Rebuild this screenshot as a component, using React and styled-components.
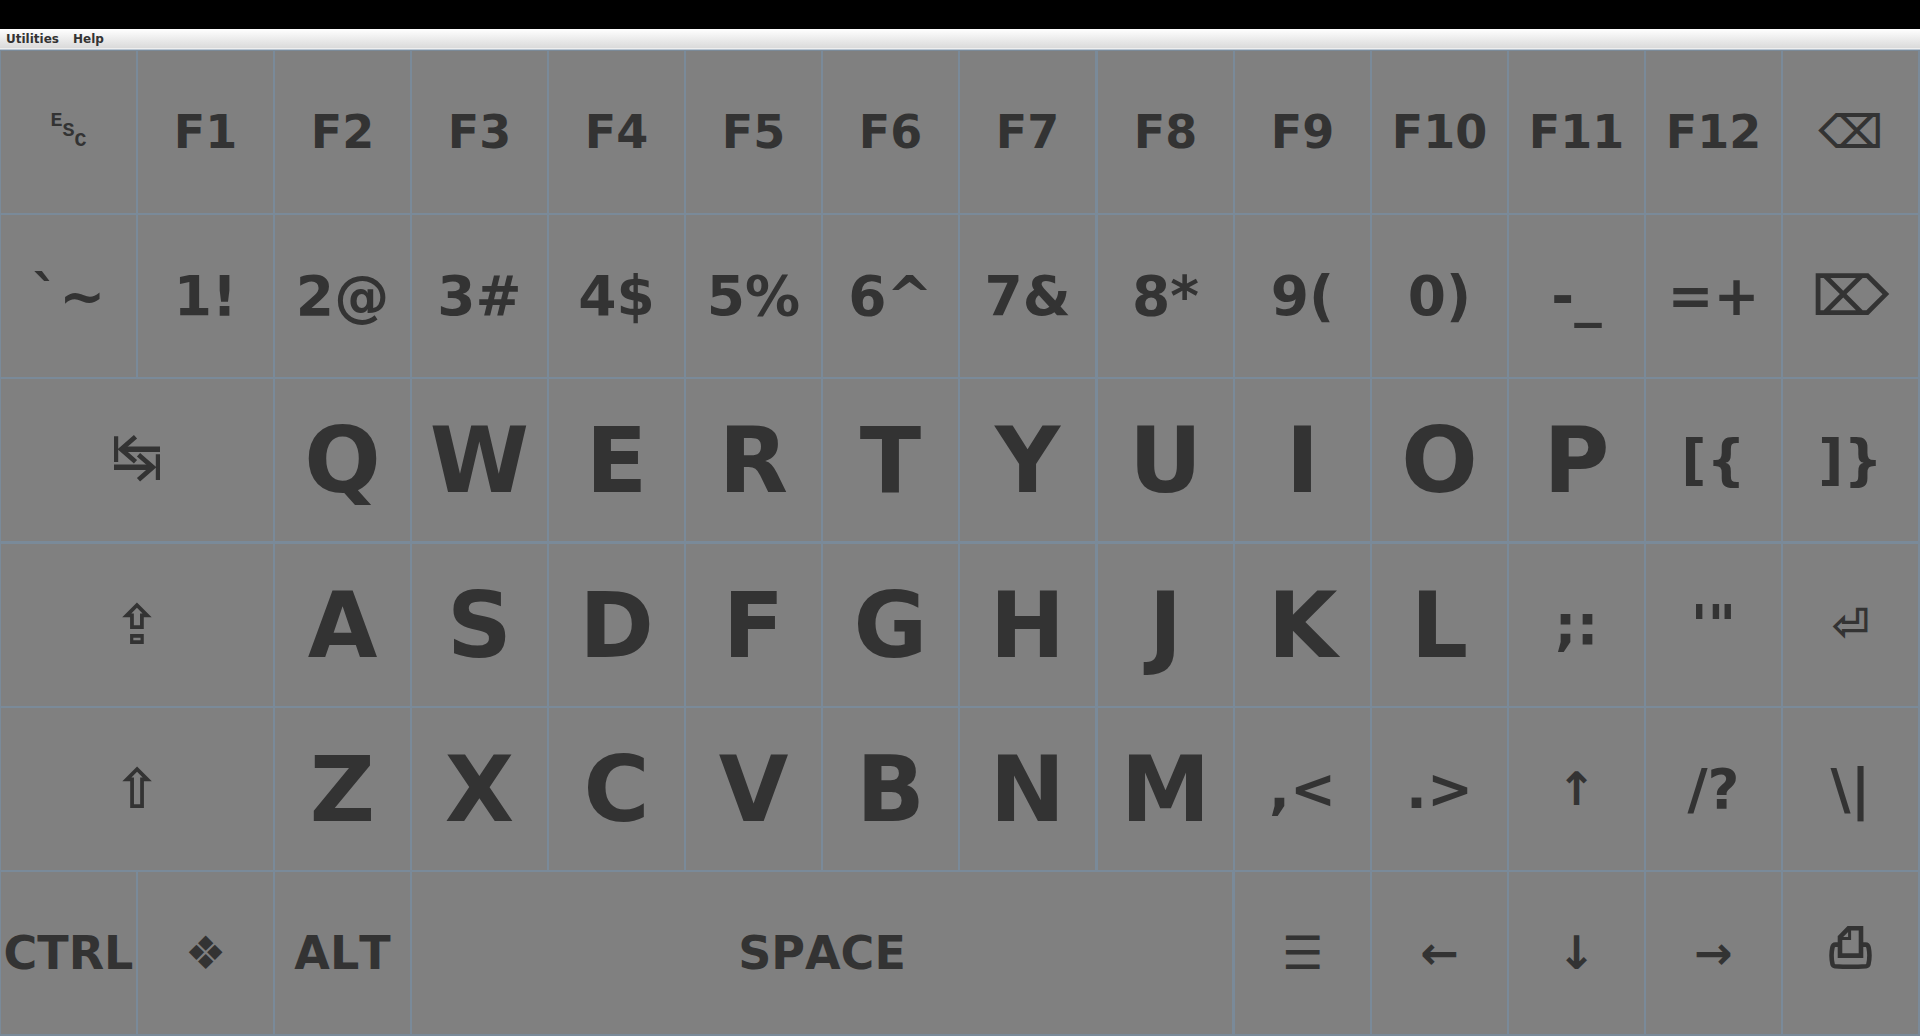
import React from "react";
import styled, { createGlobalStyle } from "styled-components";

const LINE = "#7a8a99";

const GlobalStyle = createGlobalStyle`
  html, body, #root {
    height: 100%;
    margin: 0;
  }
  body {
    background: #000;
    font-family: "DejaVu Sans", sans-serif;
  }
`;

const Screen = styled.div`
  display: flex;
  flex-direction: column;
  height: 100%;
  box-sizing: border-box;
  padding-top: 29px;
`;

const MenuBar = styled.nav`
  display: flex;
  flex: none;
  gap: 2px;
  align-items: center;
  height: 21px;
  box-sizing: border-box;
  border-bottom: 1px solid #b8c4d0;
  background: linear-gradient(#fff, #dadada 19px, #eee 19px);
`;

const MenuItem = styled.button`
  padding: 0 6px;
  border: 0;
  background: none;
  color: #333;
  font: bold 12px/18px "DejaVu Sans", sans-serif;
  font-kerning: none;
`;

const Keyboard = styled.main`
  display: flex;
  flex: 1;
  flex-direction: column;
  min-height: 0;
  box-sizing: border-box;
  padding: 0 1px 1px 0;
  background: ${LINE};
`;

const KeyRow = styled.div`
  display: flex;
  flex: 1;
  min-height: 0;
  margin-top: ${(p) => (p.$seam ? "1px" : "0")};
`;

const Key = styled.button`
  display: flex;
  flex: ${(p) => p.$span} 0 0;
  align-items: center;
  justify-content: center;
  min-width: 0;
  box-sizing: border-box;
  margin-left: ${(p) => (p.$seam ? "1px" : "0")};
  padding: 0;
  border: 0;
  background: #808080;
  box-shadow: inset 0 0 0 1px ${LINE};
  color: #333;
  font-family: "DejaVu Sans", sans-serif;
  font-size: ${(p) => p.$size}px;
  font-weight: bold;
  font-kerning: none;
  line-height: normal;
  white-space: nowrap;
`;

const Steps = styled.span`
  display: grid;
  grid-template: repeat(3, 10px) / repeat(3, 12px);
  padding-bottom: 2px;
  font: bold 20px/10px "Liberation Mono", monospace;
`;

const Step = styled.span`
  grid-area: ${(p) => p.$at} / ${(p) => p.$at};
`;

function EscapeLabel() {
  return (
    <Steps>
      {[..."ESC"].map((c, i) => (
        <Step key={c} $at={i + 1}>
          {c}
        </Step>
      ))}
    </Steps>
  );
}

function TabIcon() {
  return (
    <svg width="46" height="50" viewBox="0 0 46 50" fill="none" stroke="currentColor" aria-hidden="true">
      <path d="M2.1 1.3V27M43.9 19.3V45" strokeWidth="4.2" />
      <path d="M7 14.3H46M0 32.2H39" strokeWidth="5.4" />
      <path d="M21.5 1.8L7.2 14.3L21.5 26.8M24.5 19.7L38.8 32.2L24.5 44.7" strokeWidth="4.8" />
    </svg>
  );
}

function PrintIcon() {
  return (
    <svg width="43" height="54" viewBox="0 0 43 54" fill="none" stroke="currentColor" aria-hidden="true">
      <path d="M11 11L19.5 2.3H32V29.6H11Z" strokeWidth="4.6" />
      <path d="M20.6 3V12.4H11" strokeWidth="3" />
      <path
        d="M9 18.6H6.4Q4 18.6 3.4 21.5Q1.6 30 3.6 38.5Q4 40 6 40.2Q21.5 41.4 37 40.2Q39 40 39.4 38.5Q41.4 30 39.6 21.5Q39 18.6 36.6 18.6H34"
        strokeWidth="4.6"
      />
    </svg>
  );
}

const WORD = 46;
const PAIR = 55;
const LETTER = 90;

const key = (label, size, more = {}) => ({ label, size, span: 1, ...more });
const words = (list) => list.map((l) => key(l, WORD));
const pairs = (list) => list.map((l) => key(l, PAIR));
const letters = (text) => [...text].map((l) => key(l, LETTER));

const rows = [
  [
    key(<EscapeLabel />, WORD, { name: "Escape" }),
    ...words(["F1", "F2", "F3", "F4", "F5", "F6", "F7", "F8", "F9", "F10", "F11", "F12"]),
    key("⌫", WORD, { name: "Backspace" }),
  ],
  [
    ...pairs(["`~", "1!", "2@", "3#", "4$", "5%", "6^", "7&", "8*", "9(", "0)", "-_", "=+"]),
    key("⌦", PAIR, { name: "Delete" }),
  ],
  [
    key(<TabIcon />, PAIR, { span: 2, name: "Tab" }),
    ...letters("QWERTYUIOP"),
    ...pairs(["[{", "]}"]),
  ],
  [
    key("⇪", PAIR, { span: 2, name: "Caps Lock" }),
    ...letters("ASDFGHJKL"),
    ...pairs([";:", "'\""]),
    key("⏎", WORD, { name: "Enter" }),
  ],
  [
    key("⇧", PAIR, { span: 2, name: "Shift" }),
    ...letters("ZXCVBNM"),
    ...pairs([",<", ".>"]),
    key("↑", WORD, { name: "Up" }),
    ...pairs(["/?", "\\|"]),
  ],
  [
    key("CTRL", WORD),
    key("❖", WORD, { name: "Super" }),
    key("ALT", WORD),
    key("SPACE", WORD, { span: 6 }),
    key("☰", WORD, { name: "Menu" }),
    key("←", WORD, { name: "Left" }),
    key("↓", WORD, { name: "Down" }),
    key("→", WORD, { name: "Right" }),
    key(<PrintIcon />, PAIR, { name: "Print Screen" }),
  ],
];

// The board is drawn in two halves: a one-pixel seam follows the eighth column
// (or the key that covers it) and the third row.
function withSeams(keys) {
  let start = 0;
  let crossed = false;
  return keys.map((k) => {
    const seam = !crossed && start >= 8;
    if (seam) crossed = true;
    start += k.span;
    return { ...k, seam };
  });
}

export default function App() {
  return (
    <>
      <GlobalStyle />
      <Screen>
        <MenuBar>
          <MenuItem type="button">Utilities</MenuItem>
          <MenuItem type="button">Help</MenuItem>
        </MenuBar>
        <Keyboard>
          {rows.map((row, r) => (
            <KeyRow key={r} $seam={r === 3}>
              {withSeams(row).map((k) => (
                <Key
                  key={k.name || k.label}
                  type="button"
                  aria-label={k.name}
                  $span={k.span}
                  $size={k.size}
                  $seam={k.seam}
                >
                  {k.label}
                </Key>
              ))}
            </KeyRow>
          ))}
        </Keyboard>
      </Screen>
    </>
  );
}
